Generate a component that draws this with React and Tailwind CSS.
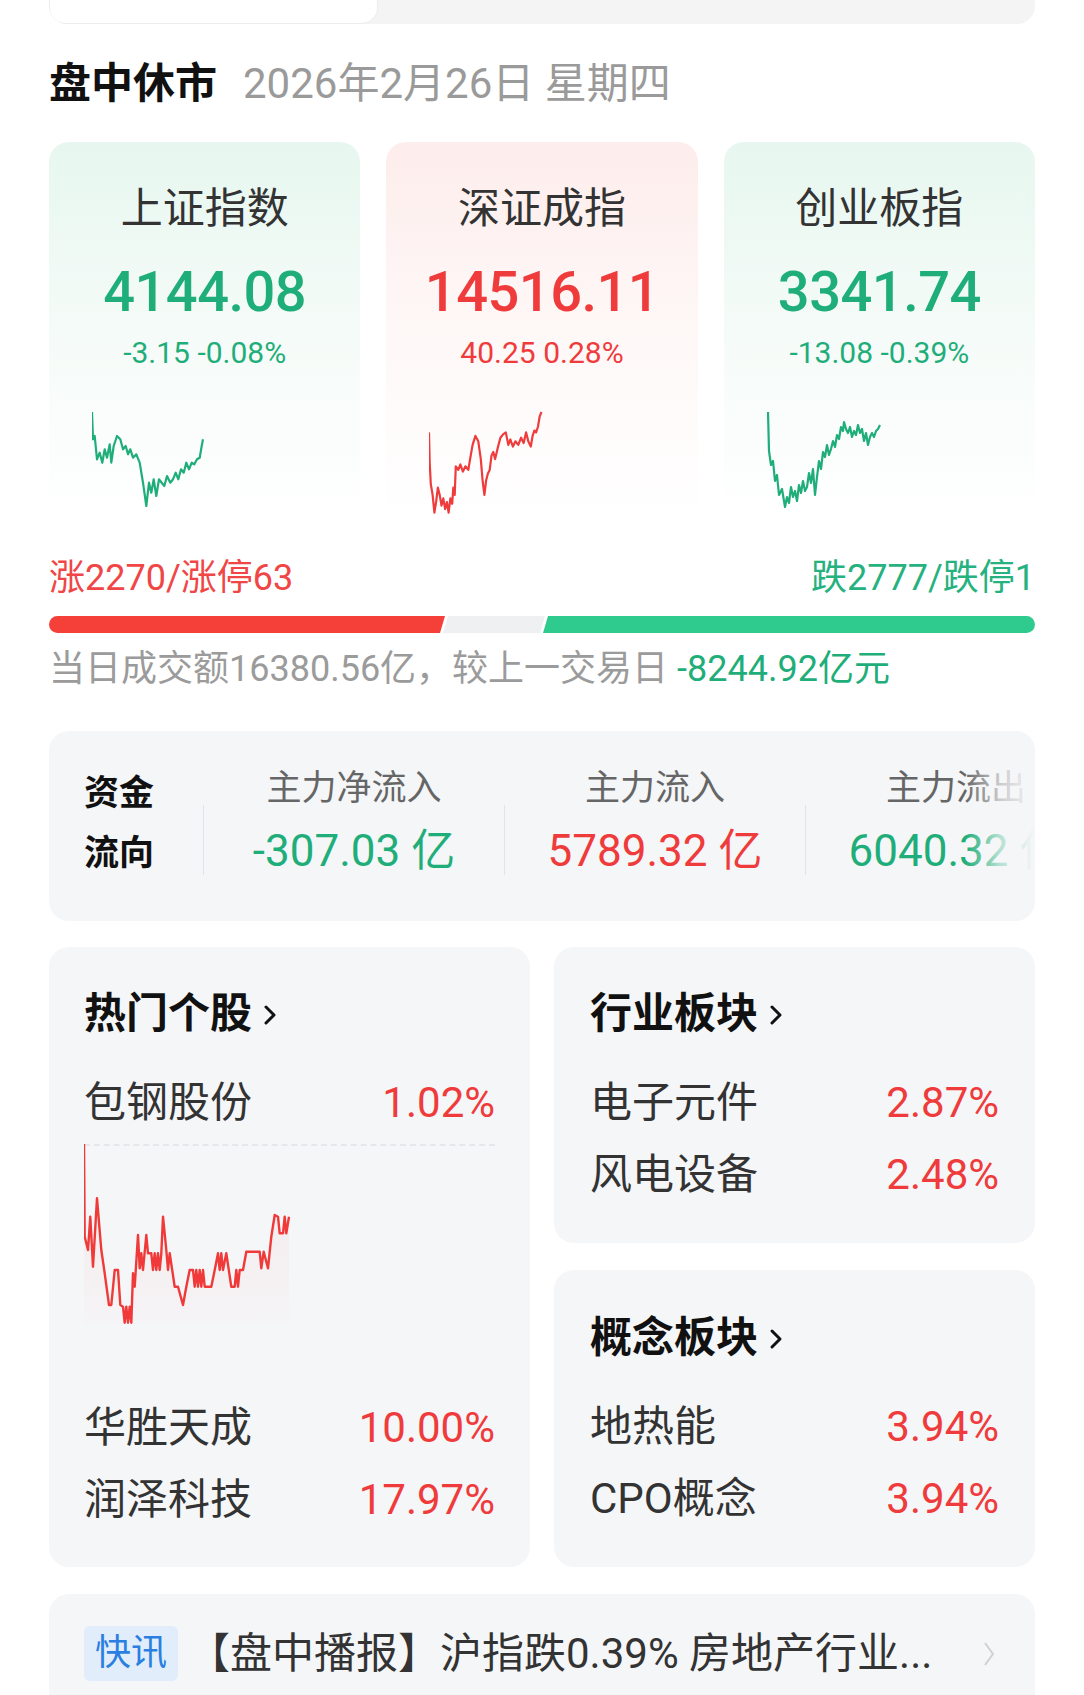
import React from 'react';

const FONT = "font-['Roboto','Noto_Sans_CJK_SC',sans-serif]";

const toPts = (arr, ox, oy, k, dy = 0) =>
  arr.map(([x, y]) => `${((x - ox) / k).toFixed(1)},${((y - oy) / k + dy).toFixed(1)}`).join(' ');

const SH = [
  [157, 848], [160, 930], [165, 920], [172, 990], [180, 970], [188, 1000], [195, 960], [202, 985],
  [210, 945], [215, 1000], [222, 950], [232, 920], [242, 930], [250, 960], [258, 950], [265, 975],
  [272, 960], [280, 985], [290, 975], [300, 1000], [310, 1060], [320, 1130], [328, 1060], [335, 1090],
  [342, 1050], [350, 1100], [358, 1050], [366, 1060], [374, 1070], [382, 1040], [392, 1060], [400, 1050],
  [408, 1030], [416, 1050], [424, 1020], [432, 1030], [440, 1000], [448, 1020], [456, 1000], [464, 1005],
  [472, 990], [480, 985], [486, 950], [490, 930],
];

const SZ = [
  [1090, 95], [1092, 180], [1095, 240], [1100, 270], [1105, 320], [1110, 290], [1115, 250], [1120, 270],
  [1125, 300], [1130, 280], [1135, 310], [1140, 290], [1145, 320], [1150, 280], [1155, 295], [1158, 250],
  [1162, 270], [1165, 190], [1172, 200], [1178, 185], [1185, 205], [1192, 190], [1200, 200], [1205, 170],
  [1212, 130], [1220, 105], [1228, 120], [1235, 170], [1240, 230], [1245, 270], [1250, 230], [1255, 210],
  [1260, 200], [1265, 160], [1270, 150], [1275, 170], [1282, 140], [1290, 110], [1298, 100], [1305, 95],
  [1312, 130], [1318, 115], [1325, 135], [1332, 120], [1340, 130], [1348, 110], [1355, 125], [1362, 95],
  [1368, 120], [1375, 135], [1380, 105], [1385, 90], [1390, 95], [1395, 80], [1400, 50], [1405, 38],
];

const CY = [
  [1, 1], [2, 40], [4, 54], [6, 50], [8, 70], [10, 64], [12, 84], [15, 78], [18, 96], [20, 86], [22, 92],
  [24, 76], [26, 86], [28, 80], [30, 90], [32, 74], [34, 82], [36, 70], [38, 80], [40, 76], [42, 62],
  [44, 72], [46, 58], [48, 84], [50, 66], [52, 50], [54, 58], [56, 41], [58, 46], [60, 34], [62, 44],
  [64, 38], [66, 30], [68, 36], [70, 24], [72, 28], [74, 16], [76, 20], [77, 11], [79, 18], [81, 22],
  [83, 16], [85, 26], [87, 20], [89, 24], [91, 14], [93, 22], [95, 18], [97, 30], [99, 22], [101, 34],
  [103, 26], [105, 22], [107, 26], [109, 20], [111, 18], [113, 14],
];

const HOT = [
  [73, 42], [75, 320], [85, 360], [92, 260], [100, 410], [112, 205], [125, 360], [135, 430], [148, 525],
  [155, 525], [165, 420], [175, 420], [182, 525], [190, 530], [195, 578], [200, 530], [205, 578],
  [210, 530], [215, 578], [220, 430], [225, 470], [235, 315], [240, 415], [245, 370], [250, 420],
  [260, 315], [265, 370], [275, 370], [280, 420], [285, 370], [290, 420], [295, 370], [300, 420],
  [305, 370], [310, 260], [320, 360], [325, 420], [330, 370], [345, 470], [355, 470], [370, 525],
  [380, 470], [390, 420], [400, 420], [405, 470], [410, 420], [415, 470], [420, 420], [425, 470],
  [430, 420], [435, 470], [445, 470], [455, 470], [465, 420], [475, 370], [480, 420], [485, 370],
  [490, 420], [500, 370], [515, 470], [525, 470], [530, 420], [535, 470], [540, 420], [550, 420],
  [560, 365], [600, 365], [605, 415], [612, 365], [625, 415], [635, 320], [645, 255], [655, 260],
  [660, 310], [670, 310], [675, 260], [680, 310], [688, 260],
];

const indices = [
  { name: '上证指数', value: '4144.08', change: '-3.15 -0.08%', up: false, pts: toPts(SH, 157, 848, 3, 1) },
  { name: '深证成指', value: '14516.11', change: '40.25 0.28%', up: true, pts: toPts(SZ, 1090, 38, 2.8, 1) },
  { name: '创业板指', value: '3341.74', change: '-13.08 -0.39%', up: false, pts: toPts(CY, 0, 0, 1) },
];

const Chevron = ({ className = '' }) => (
  <svg width="16" height="26" viewBox="0 0 16 26" className={className}>
    <polyline points="4,5 12,13 4,21" fill="none" stroke="currentColor" strokeWidth="3" strokeLinecap="round" strokeLinejoin="round" />
  </svg>
);

const IndexCard = ({ name, value, change, up, pts }) => (
  <div
    className={`h-[378px] rounded-[20px] flex flex-col items-center pt-[45px] bg-gradient-to-b ${
      up ? 'from-[#fdedec] via-[#fef8f7]' : 'from-[#e7f7f0] via-[#f5fbf8]'
    } to-white`}
  >
    <div className="text-[42px] leading-[44px] text-[#333]">{name}</div>
    <div className={`mt-[31px] text-[56px] leading-[60px] font-medium tracking-[-0.5px] ${up ? 'text-[#ef3b3b]' : 'text-[#1fae7a]'}`}>
      {value}
    </div>
    <div className={`mt-[15px] text-[30px] leading-[32px] ${up ? 'text-[#ef3b3b]' : 'text-[#1fae7a]'}`}>{change}</div>
    <div className="self-start ml-[43px] mt-[42px]">
      <svg width="116" height="104" viewBox="0 0 116 104">
        <polyline
          points={pts}
          fill="none"
          stroke={up ? '#ef3b3b' : '#1fae7a'}
          strokeWidth="2.2"
          strokeLinejoin="round"
        />
      </svg>
    </div>
  </div>
);

const Row = ({ name, pct }) => (
  <div className="flex items-center justify-between h-[72px] text-[42px]">
    <span className="text-[#333]">{name}</span>
    <span className="text-[#ef3b3b]">{pct}</span>
  </div>
);

const Header = ({ title }) => (
  <div className="flex items-center h-[52px] text-[42px] font-bold text-[#111]">
    <span>{title}</span>
    <Chevron className="ml-[10px] mt-[4px] text-[#111]" />
  </div>
);

const FlowCol = ({ label, value, color }) => (
  <div className="w-[300px] shrink-0 flex flex-col items-center pt-[38px]">
    <div className="text-[35px] leading-[40px] text-[#666] whitespace-nowrap">{label}</div>
    <div className={`mt-[18px] text-[44px] leading-[48px] whitespace-nowrap ${color}`}>{value}</div>
  </div>
);

const Divider = () => <div className="w-px h-[70px] mt-[74px] bg-[#e3e4e7] shrink-0" />;

export default function App() {
  const hot = toPts(HOT, 73, 42, 3);
  const lastX = ((688 - 73) / 3).toFixed(1);
  return (
    <div className={`w-full h-[1695px] overflow-hidden bg-white px-[49px] ${FONT}`}>
      <div className="h-[24px] rounded-b-[18px] bg-[#f4f4f5] flex overflow-hidden">
        <div className="w-[329px] h-full bg-white rounded-b-[16px] border border-t-0 border-[#ececec]" />
      </div>

      <div className="mt-[36px] flex items-center h-[48px] leading-[48px]">
        <span className="text-[42px] font-bold text-[#111]">盘中休市</span>
        <span className="ml-[26px] text-[42px] text-[#9a9a9a]">2026年2月26日 星期四</span>
      </div>

      <div className="mt-[34px] grid grid-cols-3 gap-[26px]">
        {indices.map((d) => (
          <IndexCard key={d.name} {...d} />
        ))}
      </div>

      <div className="mt-[38px] flex justify-between text-[36px] leading-[40px]">
        <span className="text-[#f04646]">涨2270/涨停63</span>
        <span className="text-[#25b27f]">跌2777/跌停1</span>
      </div>

      <div className="mt-[18px] flex h-[17px]">
        <div className="w-[396px] h-full rounded-l-full bg-[#f5403a] [clip-path:polygon(0_0,100%_0,calc(100%-5px)_100%,0_100%)]" />
        <div className="w-[105px] -ml-[5px] h-full bg-[#eff0f2] [clip-path:polygon(8px_0,100%_0,calc(100%-5px)_100%,3px_100%)]" />
        <div className="flex-1 -ml-[5px] h-full rounded-r-full bg-[#2fca8e] [clip-path:polygon(8px_0,100%_0,100%_100%,3px_100%)]" />
      </div>

      <div className="mt-[16px] text-[36px] leading-[40px] text-[#9b9b9b] whitespace-nowrap">
        当日成交额16380.56亿，较上一交易日 <span className="text-[#1fae7a]">-8244.92亿元</span>
      </div>

      <div className="relative mt-[42px] h-[190px] rounded-[20px] bg-[#f5f6f8] overflow-hidden flex">
        <div className="w-[154px] shrink-0 pl-[35px] pt-[33px] text-[35px] leading-[60px] font-bold text-[#111]">
          <div>资金</div>
          <div>流向</div>
        </div>
        <Divider />
        <FlowCol label="主力净流入" value="-307.03 亿" color="text-[#1fae7a]" />
        <Divider />
        <FlowCol label="主力流入" value="5789.32 亿" color="text-[#ef3b3b]" />
        <Divider />
        <FlowCol label="主力流出" value="6040.32 亿" color="text-[#1fae7a]" />
        <div className="absolute right-0 top-0 h-full w-[70px] bg-gradient-to-r from-[#f5f6f8]/0 via-[#f5f6f8]/70 to-[#f5f6f8]" />
      </div>

      <div className="mt-[26px] grid grid-cols-2 gap-[24px]">
        <div className="h-[620px] rounded-[20px] bg-[#f5f6f8] px-[35px] pt-[40px]">
          <Header title="热门个股" />
          <div className="mt-[27px]">
            <Row name="包钢股份" pct="1.02%" />
          </div>
          <div className="mt-[6px] border-t-2 border-dashed border-[#e6e7ea]" />
          <svg width="210" height="182" viewBox="0 0 210 182" className="-mt-[2px]">
            <defs>
              <linearGradient id="hotfill" x1="0" y1="0" x2="0" y2="1">
                <stop offset="0" stopColor="#ef3b3b" stopOpacity="0.08" />
                <stop offset="1" stopColor="#ef3b3b" stopOpacity="0.01" />
              </linearGradient>
            </defs>
            <polygon points={`${hot} ${lastX},180 0,180`} fill="url(#hotfill)" />
            <polyline points={hot} fill="none" stroke="#f03a3a" strokeWidth="2.4" strokeLinejoin="round" />
          </svg>
          <div className="mt-[65px]">
            <Row name="华胜天成" pct="10.00%" />
            <Row name="润泽科技" pct="17.97%" />
          </div>
        </div>

        <div className="flex flex-col gap-[27px]">
          <div className="h-[296px] rounded-[20px] bg-[#f5f6f8] px-[36px] pt-[40px]">
            <Header title="行业板块" />
            <div className="mt-[27px]">
              <Row name="电子元件" pct="2.87%" />
              <Row name="风电设备" pct="2.48%" />
            </div>
          </div>
          <div className="h-[297px] rounded-[20px] bg-[#f5f6f8] px-[36px] pt-[41px]">
            <Header title="概念板块" />
            <div className="mt-[27px]">
              <Row name="地热能" pct="3.94%" />
              <Row name="CPO概念" pct="3.94%" />
            </div>
          </div>
        </div>
      </div>

      <div className="mt-[27px] h-[140px] rounded-t-[20px] bg-[#f5f6f8] px-[35px] pt-[32px] flex items-start">
        <div className="w-[94px] h-[55px] rounded-[6px] bg-[#e1edfb] text-[#2a7fe0] text-[36px] leading-[55px] text-center">
          快讯
        </div>
        <div className="ml-[10px] text-[42px] leading-[55px] text-[#333] whitespace-nowrap">
          【盘中播报】沪指跌0.39% 房地产行业...
        </div>
        <svg width="14" height="28" viewBox="0 0 14 28" className="ml-auto mr-[4px] mt-[14px]">
          <polyline points="3,3 11,14 3,25" fill="none" stroke="#d0d0d0" strokeWidth="2" strokeLinejoin="round" />
        </svg>
      </div>
    </div>
  );
}
